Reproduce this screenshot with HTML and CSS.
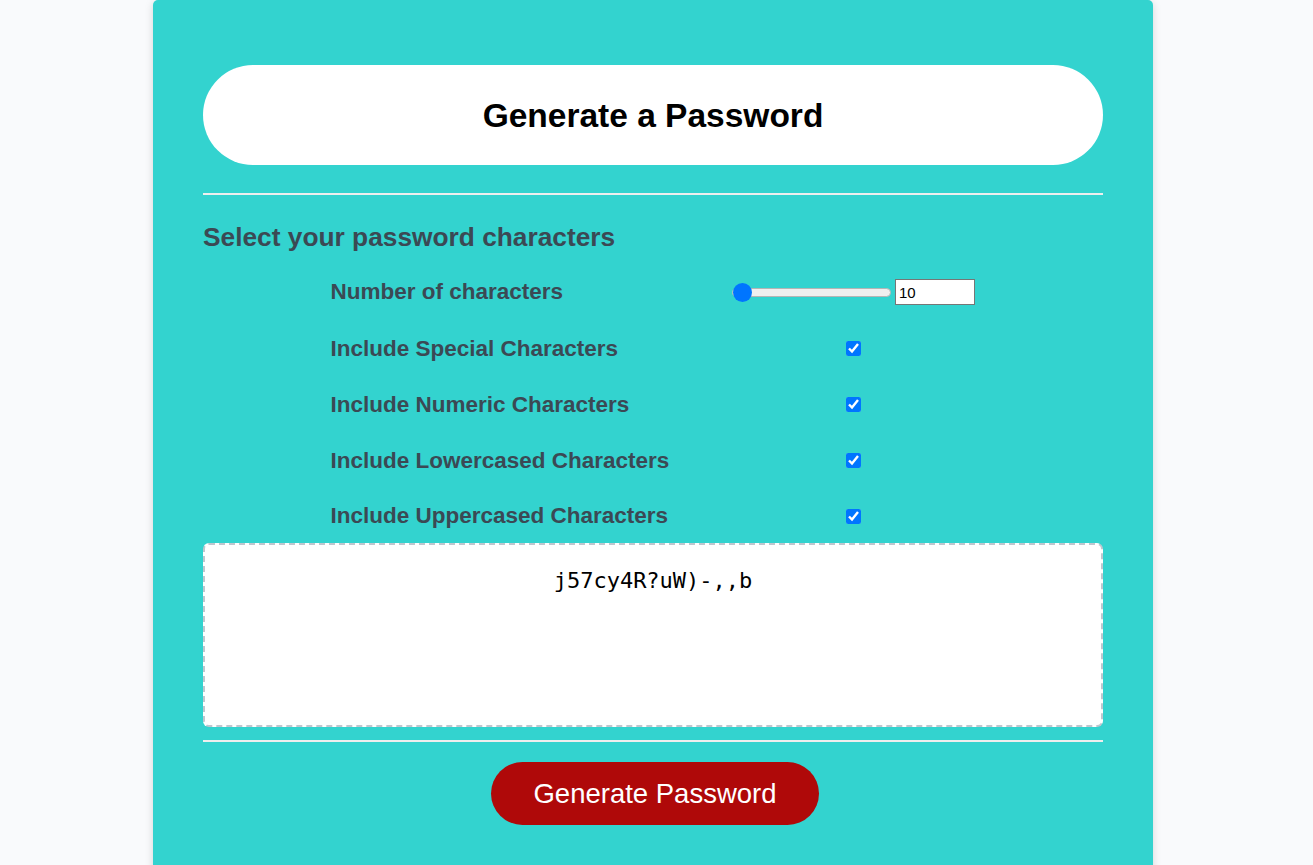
FILE: index.html
```html
<!DOCTYPE html>
<html lang="en">
<head>
<meta charset="utf-8">
<title>Password Generator</title>
<link rel="stylesheet" href="styles.css">
</head>
<body>
<div class="wrapper">
  <div class="card">
    <div class="card-header">
      <h1>Generate a Password</h1>
    </div>
    <hr class="divider">
    <div class="card-body">
      <h2 class="section-title">Select your password characters</h2>
      <div class="options">
        <label class="opt-label" for="length">Number of characters</label>
        <div class="opt-control">
          <input class="range" type="range" id="length" min="10" max="128" value="10">
          <input class="num" type="text" value="10">
        </div>
        <label class="opt-label" for="special">Include Special Characters</label>
        <div class="opt-control"><input class="check" type="checkbox" id="special" checked></div>
        <label class="opt-label" for="numeric">Include Numeric Characters</label>
        <div class="opt-control"><input class="check" type="checkbox" id="numeric" checked></div>
        <label class="opt-label" for="lower">Include Lowercased Characters</label>
        <div class="opt-control"><input class="check" type="checkbox" id="lower" checked></div>
        <label class="opt-label" for="upper">Include Uppercased Characters</label>
        <div class="opt-control"><input class="check" type="checkbox" id="upper" checked></div>
      </div>
      <textarea class="password" readonly>j57cy4R?uW)-,,b</textarea>
    </div>
    <hr class="divider divider-bottom">
    <div class="card-footer">
      <button class="btn">Generate Password</button>
    </div>
  </div>
</div>
</body>
</html>
```
FILE: styles.css
```css
* { box-sizing: border-box; }

html, body {
  margin: 0;
  padding: 0;
  height: 100%;
}

body {
  background: #f9fafc;
  font-family: "Liberation Sans", Arial, sans-serif;
  color: #3b4954;
  overflow: hidden;
}

.wrapper {
  display: flex;
  justify-content: center;
  height: 100%;
  padding-right: 7px;
}

.card {
  width: 1000px;
  min-height: 900px;
  background: #33d3cf;
  border-radius: 5px 5px 0 0;
  box-shadow: rgba(0, 0, 0, 0.15) 0 2px 8px 0;
  padding: 65px 50px 0;
}

.card-header {
  height: 100px;
  background: #ffffff;
  border-radius: 50px;
  display: flex;
  align-items: center;
  justify-content: center;
  padding-top: 2px;
}

.card-header h1 {
  margin: 0;
  font-size: 33.5px;
  font-weight: bold;
  color: #000000;
}

.divider {
  margin: 28px 0 0;
  border: 0;
  border-top: 2px solid #eeeeee;
  height: 0;
}

.section-title {
  margin: 28px 0 0;
  font-size: 26.3px;
  line-height: 28px;
  font-weight: bold;
}

.options {
  display: grid;
  grid-template-columns: 401px 244px;
  grid-template-rows: 57px 56px 56px 56px 55px;
  justify-content: center;
  margin-top: 12px;
}

.options > * {
  padding-top: 1px;
}

.opt-label {
  font-size: 22.5px;
  font-weight: bold;
  display: flex;
  align-items: center;
}

.opt-control {
  display: flex;
  align-items: center;
  justify-content: center;
  gap: 4px;
}

.range {
  -webkit-appearance: none;
  appearance: none;
  width: 159px;
  height: 19px;
  margin: 0;
  background: transparent;
}

.range::-webkit-slider-runnable-track {
  height: 9px;
  background: #efefef;
  border: 1px solid #b5b5b5;
  border-radius: 5px;
}

.range::-webkit-slider-thumb {
  -webkit-appearance: none;
  width: 19px;
  height: 19px;
  border-radius: 50%;
  background: #0075ff;
  margin-top: -6px;
  border: 0;
}

.num {
  width: 80px;
  height: 26px;
  margin: 0;
  border: 1px solid #767676;
  padding: 1px 3px;
  font-family: "Liberation Sans", Arial, sans-serif;
  font-size: 15px;
  color: #000;
  background: #fff;
}

.check {
  width: 15px;
  height: 15px;
  margin: 0 0 0 -1px;
  accent-color: #0075ff;
}

.password {
  display: block;
  width: 100%;
  height: 184px;
  margin: 0;
  border: 2px dashed #c0c7cf;
  border-radius: 6px;
  padding: 23px 10px 10px;
  resize: none;
  text-align: center;
  font-family: "DejaVu Sans Mono", "Liberation Mono", monospace;
  font-size: 22px;
  color: #000;
  background: #fff;
  outline: none;
}

.divider-bottom {
  margin-top: 13px;
}

.card-footer {
  display: flex;
  justify-content: center;
  padding-top: 20px;
}

.btn {
  height: 63px;
  padding: 0 42px;
  margin-left: 4px;
  border: 0;
  border-radius: 32px;
  background: #af0909;
  color: #ffffff;
  font-family: "Liberation Sans", Arial, sans-serif;
  font-size: 27.5px;
  cursor: pointer;
}
```
